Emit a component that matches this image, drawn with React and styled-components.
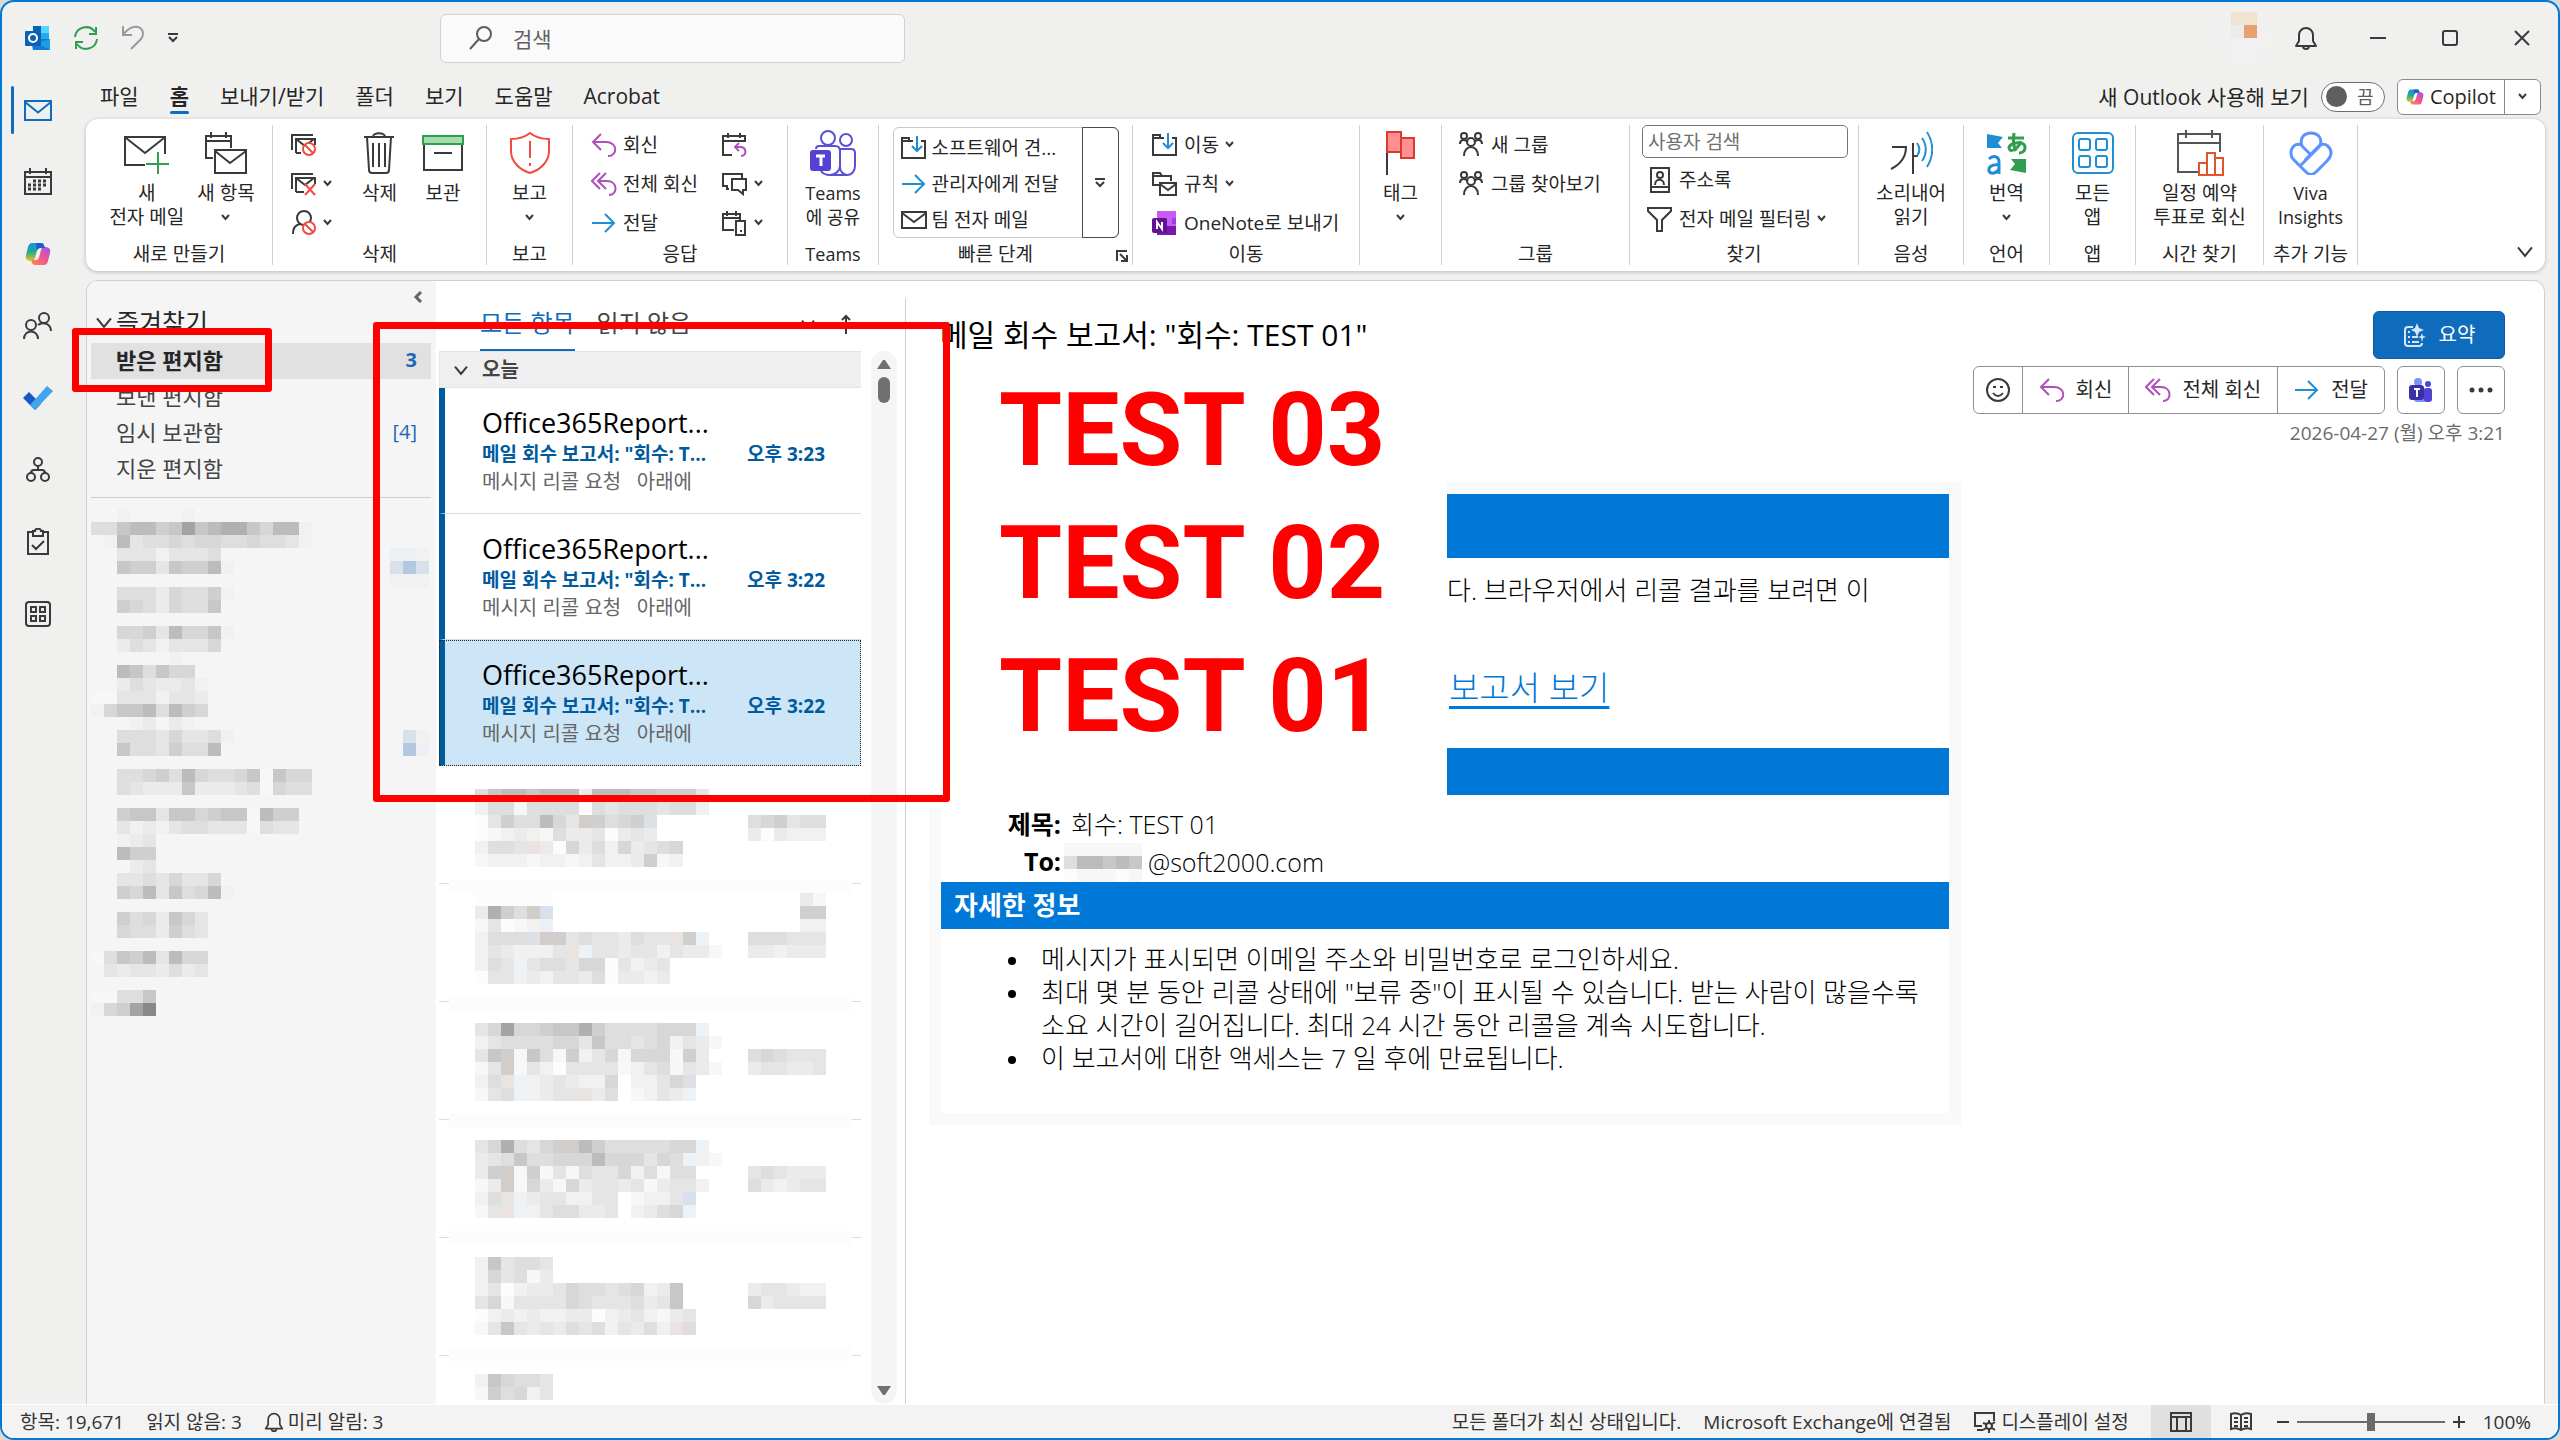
import React, { useState } from 'react';
import styled, { createGlobalStyle, css } from 'styled-components';

const GlobalStyle = createGlobalStyle`
  * {
    box-sizing: border-box;
  }
  body {
    margin: 0;
    background: #d9d9d9;
    color: #262626;
    font-family: 'Open Sans', 'Noto Sans CJK KR', sans-serif;
    font-size: 20px;
    line-height: 24px;
  }
  button,
  input {
    font: inherit;
    color: inherit;
  }
  button {
    padding: 0;
    border: 0;
    background: none;
    white-space: nowrap;
  }
  ul {
    margin: 0;
    padding: 0;
    list-style: none;
  }
  svg {
    display: block;
    flex: none;
  }
`;

/* ---------- icons ---------- */

const Icon = ({ w = 24, h = 24, color = '#3a3a3a', stroke = 2, children }) => (
  <svg
    width={w}
    height={h}
    viewBox={`0 0 ${w} ${h}`}
    fill="none"
    stroke={color}
    strokeWidth={stroke}
    aria-hidden="true"
  >
    {children}
  </svg>
);

const PURPLE = '#b04fbb';
const BLUE = '#1e8fd5';
const RED = '#f04a43';
const GREEN = '#2f9e4f';

const Chevron = ({ size = 9, color }) => (
  <Icon w={size} h={size} color={color}>
    <path d={`M1 ${size / 3 - 1}L${size / 2} ${size - 3}L${size - 1} ${size / 3 - 1}`} />
  </Icon>
);

const OutlookIcon = () => (
  <Icon w={26} h={26} stroke={0}>
    <path d="M8 1h16v14H8z" fill="#1490df" />
    <path d="M8 1h8v7H8z" fill="#0a63b5" />
    <path d="M16 1h8v7h-8z" fill="#50d9ff" />
    <path d="M16 8h8v7h-8z" fill="#28a8ea" />
    <path d="M6 14h19v11H8z" fill="#1479cf" />
    <path d="M25 14v11L11 18z" fill="#1b9de2" />
    <rect x="0" y="6" width="16" height="15" rx="1" fill="#0f5fb8" />
    <ellipse cx="8" cy="13" rx="4" ry="4" stroke="#fff" strokeWidth="2" />
  </Icon>
);

const SyncIcon = () => (
  <Icon w={26} h={26} color={GREEN}>
    <path d="M2 12A11 11 0 0 1 22 7M24 14A11 11 0 0 1 4 19" />
    <path d="M23 2v7h-7M3 24v-7h7" />
  </Icon>
);

const UndoIcon = () => (
  <Icon w={24} h={26} color="#9b9b9b">
    <path d="M2 1v9h9M2 10C7 3 12 1 17 2c6 2 6 8 3 12L10 24" />
  </Icon>
);

const OverflowIcon = () => (
  <Icon w={12} h={12}>
    <path d="M1 2h10M2 5l4 4 4-4" />
  </Icon>
);

const SearchIcon = () => (
  <Icon w={24} h={24} color="#5c5c5c">
    <circle cx="15" cy="8" r="7" />
    <path d="M10 13L1 23" />
  </Icon>
);

const BellIcon = ({ w = 24 }) => (
  <svg width={w} height={w} viewBox="0 0 24 24" fill="none" stroke="#3a3a3a" strokeWidth="2" aria-hidden="true">
    <path d="M2 20h20l-3-5V9a7 7 0 0 0-14 0v6z" strokeLinejoin="round" />
    <path d="M9 20a3 3 0 0 0 6 0" />
  </svg>
);

const MailIcon = ({ w = 28, h = 21, color = '#3a3a3a' }) => (
  <Icon w={w} h={h} color={color}>
    <path d={`M1 1h${w - 2}v${h - 2}H1zM1 2l${w / 2 - 1} ${h / 2}L${w - 1} 2`} />
  </Icon>
);

const CalendarIcon = () => (
  <Icon w={28} h={28}>
    <path d="M1 4h26v22H1zM1 9h26M6 0v6M22 0v6" />
    <path d="M9 13h15M4 17h20M4 21h15" strokeDasharray="3 2" strokeWidth="3" />
  </Icon>
);

const CopilotIcon = ({ w = 26 }) => (
  <svg width={w} height={w} viewBox="0 0 26 26" aria-hidden="true">
    <defs>
      <linearGradient id="copilotA" x1="0" y1="0" x2="0" y2="1">
        <stop offset="0" stopColor="#1c8fe6" />
        <stop offset="0.5" stopColor="#1fae8c" />
        <stop offset="1" stopColor="#f4c01e" />
      </linearGradient>
      <linearGradient id="copilotB" x1="1" y1="0" x2="0" y2="1">
        <stop offset="0" stopColor="#a34ff0" />
        <stop offset="0.5" stopColor="#f2588c" />
        <stop offset="1" stopColor="#ff8a50" />
      </linearGradient>
    </defs>
    <path d="M7 2h9c3 0 3 3 4 5h-5c-2 0-3 2-4 6l-1 4c-1 3-2 3-4 3-4 0-6-2-5-6l2-8c1-3 2-4 4-4z" fill="url(#copilotA)" />
    <path d="M19 24h-9c-3 0-3-3-4-5h5c2 0 3-2 4-6l1-4c1-3 2-3 4-3 4 0 6 2 5 6l-2 8c-1 3-2 4-4 4z" fill="url(#copilotB)" />
    <path d="M11 2h5c3 0 3 3 4 5h-5c-2 0-3 2-3 3z" fill="#1a5fd0" />
  </svg>
);

const PeopleIcon = () => (
  <Icon w={30} h={28}>
    <circle cx="8" cy="13" r="5" />
    <path d="M1 27c0-10 14-10 14 0" />
    <circle cx="21" cy="6" r="5" />
    <path d="M15 13c5-4 13-1 13 6" />
  </Icon>
);

const TodoIcon = () => (
  <Icon w={30} h={24} stroke={0}>
    <path d="M0 12l6-6 12 12-6 6z" fill="#185abd" />
    <path d="M7 19L24 0l6 5-18 19z" fill="#41a5ee" />
  </Icon>
);

const OrgIcon = () => (
  <Icon w={24} h={26}>
    <circle cx="12" cy="5" r="4" />
    <circle cx="5" cy="20" r="4" />
    <circle cx="19" cy="20" r="4" />
    <path d="M12 9v4M5 16c0-2 1-3 3-3h8c2 0 3 1 3 3" />
  </Icon>
);

const ClipIcon = () => (
  <Icon w={24} h={28}>
    <path d="M7 4H2v22h20V4h-5M7 3h2c0-3 6-3 6 0h2v5H7zM6 17l4 4 8-8" />
  </Icon>
);

const AppsIcon = () => (
  <Icon w={26} h={26}>
    <rect x="1" y="1" width="24" height="24" rx="3" />
    <path d="M6 6h5v5H6zM15 6h5v5h-5zM6 15h5v5H6zM15 15h5v5h-5z" />
  </Icon>
);

const NewMailIcon = () => (
  <Icon w={46} h={42}>
    <path d="M41 22V5H1v28h20M2 6l19 15L40 6" />
    <path d="M22 32h23M34 20v22" stroke={GREEN} />
  </Icon>
);

const NewItemsIcon = () => (
  <Icon w={42} h={42}>
    <path d="M8 26H1V4h25v12M1 9h25M6 0v6M21 0v6M10 18h31v23H10zM10 19l15 12 16-12" />
  </Icon>
);

const Ban = ({ x = 17, y = 16 }) => (
  <g stroke={RED}>
    <circle cx={x} cy={y} r="6" fill="#fff" />
    <path d={`M${x - 4} ${y - 4}l8 8`} />
  </g>
);

const IgnoreIcon = () => (
  <Icon w={26} h={24}>
    <path d="M1 17V2h21M5 20V6h19v6M5 6l9 7 9-7M5 20h5" />
    <Ban x={18} y={16} />
  </Icon>
);

const CleanUpIcon = () => (
  <Icon w={26} h={24}>
    <path d="M1 17V2h21M5 20V6h19v6M5 6l9 7 9-7M5 20h8" />
    <path d="M14 12l10 11M24 12L14 23" stroke={RED} />
  </Icon>
);

const JunkIcon = () => (
  <Icon w={26} h={26}>
    <circle cx="13" cy="8" r="7" />
    <path d="M9 14c-5 1-7 5-7 10" />
    <Ban x={18} y={18} />
  </Icon>
);

const TrashIcon = () => (
  <Icon w={32} h={42}>
    <path d="M1 5h30M10 5c0-5 12-5 12 0M4 5l2 33c0 2 1 3 3 3h14c2 0 3-1 3-3l2-33M10 11v24M16 11v24M22 11v24" />
  </Icon>
);

const ArchiveIcon = () => (
  <Icon w={42} h={42}>
    <path d="M2 12v26h38V12M12 21h18" />
    <rect x="1" y="4" width="40" height="8" fill="#a5dcaa" stroke={GREEN} />
  </Icon>
);

const ShieldIcon = () => (
  <Icon w={42} h={44} color={RED}>
    <path d="M21 2c5 4 12 6 19 6v12c0 11-9 19-19 22C11 39 2 31 2 20V8c7 0 14-2 19-6zM21 10v17M21 32v3" />
  </Icon>
);

const ReplyIcon = () => (
  <Icon w={26} h={24} color={PURPLE}>
    <path d="M10 1L2 9l8 8M2 9h13c12 0 12 14 2 14" />
  </Icon>
);

const ReplyAllIcon = () => (
  <Icon w={26} h={24} color={PURPLE}>
    <path d="M9 1L1 9l8 8M15 1L7 9l8 8M7 9h9c11 0 11 14 2 14" />
  </Icon>
);

const ForwardIcon = () => (
  <Icon w={26} h={24} color={BLUE}>
    <path d="M1 12h22M14 3l9 9-9 9" />
  </Icon>
);

const MeetingReplyIcon = () => (
  <Icon w={26} h={24}>
    <path d="M10 22H1V3h22v6M1 8h22M6 0v5M18 0v5" />
    <path d="M17 10l-4 4 4 4M13 14h5c7 0 7 9 1 9" stroke={PURPLE} />
  </Icon>
);

const ChatIcon = () => (
  <Icon w={26} h={24}>
    <path d="M7 17H5v-3H1V2h19v5M10 7h14v11h-3v4l-5-4h-6z" />
  </Icon>
);

const ShareMobileIcon = () => (
  <Icon w={26} h={26}>
    <path d="M12 20H1V4h17v7M1 8h17M5 1v5M14 1v5M14 11h9v14h-9zM18 21h2" />
  </Icon>
);

const TeamsIcon = () => (
  <Icon w={46} h={48} color="#5b4fd8">
    <circle cx="18" cy="9" r="7" />
    <circle cx="36" cy="11" r="6" />
    <path d="M6 20c0-2 1-3 3-3h16c3 0 5 2 5 5v15c0 5-5 9-10 9-4 0-7-1-9-4M30 20h11c3 0 4 1 4 4v13c0 6-4 9-8 9H20M30 20v18c0 4 3 8 7 8" />
    <rect x="0" y="21" width="21" height="21" rx="3" fill="#5442d4" stroke="none" />
    <path d="M6 27h9M11 27v10" stroke="#fff" strokeWidth="3" />
  </Icon>
);

const MoveIcon = () => (
  <Icon w={26} h={24}>
    <path d="M8 5v-3H1v20h23V5h-4M1 5h11" />
    <path d="M16 0v15M11 10l5 5 5-5" stroke={BLUE} />
  </Icon>
);

const RulesIcon = () => (
  <Icon w={26} h={26}>
    <path d="M8 14H1V2h7l2 3h9v5M1 5h9M8 12h16v12H8zM8 13l8 6 8-6" />
  </Icon>
);

const OneNoteIcon = () => (
  <Icon w={26} h={26} stroke={0}>
    <path d="M5 1h19v24H5z" fill="#c65cf5" />
    <path d="M20 8h4v6h-4z" fill="#a33be0" />
    <path d="M5 16h19v9H5z" fill="#7719aa" />
    <rect x="0" y="8" width="15" height="15" rx="2" fill="#5f1292" />
    <path d="M5 19v-7l5 7v-7" stroke="#fff" strokeWidth="2" />
  </Icon>
);

const FlagIcon = () => (
  <Icon w={32} h={44}>
    <path d="M2 18v26" />
    <path d="M2 1h14v6h13v20H16v-6H2zM16 7v14" fill="#ff9091" stroke="#dc3a31" />
  </Icon>
);

const GroupIcon = () => (
  <Icon w={26} h={26}>
    <circle cx="5" cy="4" r="3" />
    <circle cx="19" cy="4" r="3" />
    <circle cx="12" cy="10" r="4" />
    <path d="M1 12c0-5 5-5 8-2M23 12c0-5-5-5-8-2M5 24c0-12 14-12 14 0" />
  </Icon>
);

const AddressBookIcon = () => (
  <Icon w={26} h={26}>
    <path d="M4 1h18v24H4zM4 20h18M8 18c0-7 9-7 9 0" />
    <circle cx="13" cy="8" r="3" />
  </Icon>
);

const FilterIcon = () => (
  <Icon w={26} h={26}>
    <path d="M1 2h23v3l-9 9v11h-5V14L1 5z" />
  </Icon>
);

const ReadAloudIcon = () => (
  <Icon w={44} h={46}>
    <path d="M3 17h14c0 9-5 17-15 22M24 13v31M24 26h5" />
    <path d="M28 13c3 4 3 9 0 13M33 8c5 7 5 16 0 23M38 2c7 11 7 24 0 35" stroke={BLUE} />
  </Icon>
);

const TranslateIcon = () => (
  <Icon w={42} h={44}>
    <path d="M1 3l16 3-5 6 4 5H1z" fill={BLUE} stroke="none" />
    <path d="M40 42l-16-3 5-6-4-5h15z" fill={GREEN} stroke="none" />
    <path d="M22 7h16M28 2c-1 8-1 12 2 18M35 10c-3 9-12 12-12 7 0-6 17-8 16 0 0 3-3 5-6 5" stroke={GREEN} strokeWidth="3" />
    <path d="M3 28c4-4 10-3 10 3v12M13 34C6 33 2 36 3 40c2 4 8 2 10-2" stroke={BLUE} strokeWidth="3" />
  </Icon>
);

const AllAppsIcon = () => (
  <Icon w={42} h={42} color={BLUE}>
    <rect x="1" y="1" width="40" height="40" rx="5" />
    <rect x="7" y="7" width="11" height="11" rx="2" />
    <rect x="24" y="7" width="11" height="11" rx="2" />
    <rect x="7" y="24" width="11" height="11" rx="2" />
    <rect x="24" y="24" width="11" height="11" rx="2" />
  </Icon>
);

const PollIcon = () => (
  <Icon w={48} h={46} color="#555">
    <path d="M22 42H2V4h42v18M2 13h42M10 0v8M36 0v8" />
    <path d="M23 33h8v12h-8zM31 23h8v22h-8zM39 28h8v17h-8z" fill="#fff" stroke="#e2542a" />
  </Icon>
);

const VivaIcon = () => (
  <Icon w={44} h={44} color="#5c93ff" stroke={3}>
    <path d="M13 15C10 6 16 2 22 2s12 4 9 13l-9 9zM13 14C6 11 2 17 2 22c0 4 1 5 4 8l11 11c3 3 7 3 10 0l11-11c3-3 4-5 4-8 0-5-5-11-11-8M22 24L12 34M31 14L16 29" />
  </Icon>
);

const SmileIcon = () => (
  <Icon w={26} h={26}>
    <circle cx="13" cy="13" r="11" />
    <path d="M8 16c3 4 7 4 10 0M8 10h3M15 10h3" />
  </Icon>
);

const TeamsColorIcon = () => (
  <Icon w={24} h={26} stroke={0}>
    <circle cx="9" cy="5" r="4" fill="#7b93ff" />
    <circle cx="19" cy="7" r="3" fill="#5442d4" />
    <path d="M4 11h12v14H8c-2 0-4-2-4-4z" fill="#7b93ff" />
    <rect x="15" y="11" width="8" height="14" rx="3" fill="#5442d4" />
    <rect x="0" y="8" width="15" height="15" rx="3" fill="#3a31a8" />
    <path d="M5 12h6M8 12v8" stroke="#fff" strokeWidth="2" />
  </Icon>
);

const SummaryIcon = () => (
  <Icon w={24} h={26} color="#d7e6f5">
    <path d="M10 5H5C3 5 2 6 2 8v13c0 2 1 3 3 3h11c2 0 3-1 3-3M5 10h2M5 15h2M9 15h6M5 20h2M9 20h7" />
    <path d="M14 1l2 5 5 2-5 2-2 5-2-5-4-2 4-2zM19 11l1 3 3 1-3 1-1 4-1-4-3-1 3-1z" fill="#d7e6f5" stroke="none" />
  </Icon>
);

const DisplayIcon = () => (
  <Icon w={24} h={22}>
    <path d="M9 15H2V2h19v8M4 19h6" />
    <circle cx="16" cy="15" r="3" />
    <path d="M16 9v3M16 18v4M10 12l3 1M19 17l3 2M10 19l3-2M19 13l3-2" />
  </Icon>
);

const LayoutIcon = () => (
  <Icon w={22} h={20}>
    <path d="M1 1h20v18H1zM1 5h20M7 5v14M16 5v14" />
  </Icon>
);

const BookIcon = () => (
  <Icon w={22} h={20}>
    <path d="M11 3C8 1 4 1 1 2v15c3-1 7-1 10 1 3-2 7-2 10-1V2c-3-1-7-1-10 1zM11 3v15M4 6h4M4 10h4M4 14h4M14 6h4M14 10h4M14 14h4" />
  </Icon>
);

/* ---------- censored areas ---------- */

const CELL = 13;

const SHADES = {
  0: '#fcfcfc',
  1: '#f7f7f7',
  2: '#f1f1f1',
  3: '#ebebeb',
  4: '#e5e5e5',
  5: '#dedede',
  6: '#d7d7d7',
  7: '#cfcfcf',
  8: '#c7c7c7',
  9: '#bcbcbc',
  a: '#b0b0b0',
  b: '#a3a3a3',
  c: '#888888',
  p: '#eceff3',
  q: '#d8e0ec',
  r: '#b4c8e1',
  w: '#d3cdc9',
  x: '#ebe3df',
  y: '#dde1e5',
  z: '#edf2f6',
  o: '#e8a070',
  m: '#f0e3d2',
};

const Mosaic = ({ rows, cols }) => (
  <svg width={cols * CELL} height={rows.length * CELL} shapeRendering="crispEdges" aria-hidden="true">
    {rows.map((row, y) =>
      [...row].map(
        (shade, x) =>
          SHADES[shade] && (
            <rect
              key={`${x}-${y}`}
              x={x * CELL}
              y={y * CELL}
              width={CELL}
              height={CELL}
              fill={SHADES[shade]}
            />
          )
      )
    )}
  </svg>
);

// left block, then a second block starting at a fixed column
const split = (left, right, at = 23) => left.padEnd(at, '.') + right;

const NAV_ROWS = [
  '..2....2',
  '5589978b89aa86992',
  '.2945565665565542',
  split('..44424445', 'pp2'),
  split('..877487792', 'qrq'),
  split('', '222'),
  '..555365572',
  '..76536558',
  '',
  '..667496682',
  '..35424446',
  '......2',
  '..985866',
  '..3543342',
  '114442443',
  '268895976',
  '...23.32',
  split('..555464452', 'q2', 24),
  split('..85547559', 'rp', 24),
  '',
  '..556759655681866',
  '..543338333451655',
  '',
  '..78848867881977',
  '..42324554441544',
  '..234',
  '..977',
  '...34',
  '..445464462'.slice(0, 10),
  '..769485692',
  '',
  '..7563864',
  '..6553754',
  '',
  '158794966',
  '.43443534',
  '',
  '11558',
  '267bc',
];

const BAND = '0'.repeat(31);

const LIST_ROWS = [
  '..589989993999887774',
  '..255155550545554552',
  split('..04755964w7567y', '567455'),
  split('..01232153340343', '303222'),
  '..2554x30635263456',
  '..1222122124223712',
  '',
  BAND,
  split('..000000', '31', 27),
  split('..3a75wq', '77', 27),
  split('..14012p', '22', 27),
  split('..2555yw745443544x7z', '555444'),
  split('..2432224xz4434424331', '332333'),
  '..254z45546604234',
  '..044232443503323',
  '',
  BAND,
  '',
  '..46b66788a75555666z',
  '..2455556648554562431',
  split('..48w1851wz461666173', '565444'),
  split('..14w1420444412451431', '344334'),
  '..25xz2343226.2246y',
  '..145z2344x35.1243z',
  '',
  BAND,
  '',
  '..46a5467w975555566z',
  '..3458556669666465z21',
  split('..37w17141544625155', '454333'),
  split('..13w163163443413442', '532344'),
  '..25423442244.1224q',
  '..14xz2455334.2356z',
  '',
  BAND,
  '',
  '..284554',
  '..264513',
  split('..2402334655456238', '344322'),
  split('..4614444654445348', '634444'),
  '..02323223302342134',
  '..148434354524352x5',
  '',
  BAND,
  '',
  '..286554',
  '..175624',
];

/* ---------- window and title bar ---------- */

const Window = styled.div`
  position: relative;
  display: flex;
  flex-direction: column;
  min-height: 100vh;
  border: 2px solid #0078d4;
  border-radius: 14px;
  background: #f0f0ee;
  overflow: hidden;
`;

const TitleBar = styled.header`
  display: flex;
  align-items: center;
  height: 72px;
  padding-left: 23px;
`;

const QuickAccess = styled.div`
  display: flex;
  align-items: center;
  gap: 22px;
  width: 415px;
`;

const SearchBox = styled.label`
  display: flex;
  align-items: center;
  gap: 20px;
  width: 465px;
  height: 49px;
  padding: 0 28px;
  border: 1px solid #d1d1d1;
  border-radius: 6px;
  background: #fafafa;
  input {
    flex: 1;
    min-width: 0;
    padding: 2px 0 0;
    border: 0;
    outline: 0;
    background: none;
    font-size: 21px;
  }
  input::placeholder {
    color: #616161;
    opacity: 1;
  }
`;

const WindowControls = styled.div`
  display: flex;
  align-items: center;
  margin-left: auto;
`;

const WindowButton = styled.button`
  display: grid;
  place-items: center;
  width: 72px;
  height: 40px;
`;

const Body = styled.div`
  display: flex;
  flex: 1;
  min-height: 0;
`;

const Rail = styled.nav`
  display: flex;
  flex-direction: column;
  width: 84px;
  flex: none;
`;

const RailButton = styled.button`
  display: flex;
  align-items: center;
  justify-content: center;
  height: 72px;
  padding-right: 12px;
  position: relative;
  ${({ $active }) =>
    $active &&
    css`
      &::before {
        content: '';
        position: absolute;
        left: 9px;
        top: 12px;
        width: 3px;
        height: 48px;
        border-radius: 2px;
        background: #0f6cbd;
      }
    `}
`;

const Content = styled.div`
  display: flex;
  flex-direction: column;
  flex: 1;
  min-width: 0;
  padding-right: 13px;
`;

/* ---------- ribbon ---------- */

const TabRow = styled.div`
  display: flex;
  align-items: center;
  height: 45px;
  padding: 0 4px 0 14px;
`;

const Tab = styled.button`
  height: 45px;
  margin-right: 31px;
  padding-top: 5px;
  font-size: 21px;
  font-weight: ${({ $active }) => ($active ? 700 : 400)};
  &::after {
    content: '';
    display: block;
    height: 3px;
    margin-top: 3px;
    border-radius: 2px;
    background: ${({ $active }) => ($active ? '#0f6cbd' : 'transparent')};
  }
`;

const TabRowEnd = styled.div`
  display: flex;
  align-items: center;
  gap: 12px;
  margin-left: auto;
`;

const Toggle = styled.label`
  display: flex;
  align-items: center;
  gap: 12px;
  font-size: 21px;
  input {
    position: absolute;
    opacity: 0;
  }
`;

const ToggleTrack = styled.span`
  display: flex;
  align-items: center;
  gap: 10px;
  width: 64px;
  height: 30px;
  padding-left: 4px;
  border: 1px solid #6e6e6e;
  border-radius: 15px;
  background: #fff;
  color: #5c5c5c;
  font-size: 18px;
  &::before {
    content: '';
    width: 21px;
    height: 21px;
    border-radius: 50%;
    background: #5f5f5f;
  }
`;

const CopilotSplit = styled.div`
  display: flex;
  height: 36px;
  border: 1px solid #8a8a8a;
  border-radius: 6px;
  background: #fff;
  button {
    display: flex;
    align-items: center;
    gap: 6px;
    padding: 0 8px;
  }
  button + button {
    width: 36px;
    padding: 0;
    justify-content: center;
    border-left: 1px solid #8a8a8a;
  }
`;

const RibbonBar = styled.section`
  display: flex;
  min-height: 152px;
  padding: 6px 0;
  border-radius: 12px;
  background: #fff;
  box-shadow: 0 1px 4px rgba(0, 0, 0, 0.24);
`;

const Group = styled.div`
  display: flex;
  flex-direction: column;
  flex: none;
  width: ${({ $width }) => $width}px;
  border-right: 1px solid #d1d1d1;
`;

const GroupBody = styled.div`
  display: flex;
  justify-content: ${({ $align }) => $align || 'center'};
  gap: ${({ $gap }) => $gap || 0}px;
  height: 117px;
  padding-left: ${({ $pad }) => $pad || 0}px;
`;

const GroupLabel = styled.div`
  position: relative;
  height: 20px;
  padding-right: ${({ $launcher }) => ($launcher ? 20 : 0)}px;
  line-height: 25px;
  text-align: center;
  white-space: nowrap;
  font-size: ${({ $latin }) => ($latin ? 18 : 19)}px;
`;

const Launcher = styled.button`
  position: absolute;
  right: 4px;
  bottom: 0;
`;

const BigButton = styled.button`
  display: flex;
  flex-direction: column;
  align-items: center;
  text-align: center;
  font-size: ${({ $latin }) => ($latin ? 18 : 19)}px;
  > span:first-child {
    display: grid;
    place-items: center;
    height: 56px;
  }
  > svg {
    margin-top: 8px;
  }
`;

const BigPair = styled.div`
  display: flex;
  gap: 25px;
`;

const SmallColumn = styled.div`
  display: flex;
  flex-direction: column;
`;

const SmallButton = styled.button`
  display: flex;
  align-items: center;
  gap: 6px;
  height: 39px;
  font-size: 19px;
`;

const StepsBox = styled.div`
  display: flex;
  width: 226px;
  height: 111px;
  margin: 2px 0 0;
  border: 1px solid #c8c8c8;
  border-radius: 6px;
`;

const StepList = styled.div`
  flex: 1;
  min-width: 0;
  padding: 2px 7px 0;
  ${SmallButton} {
    height: 36px;
    gap: 5px;
  }
`;

const StepMore = styled.button`
  display: grid;
  place-items: center;
  width: 37px;
  margin: -1px;
  border: 1px solid #4a4a4a;
  border-radius: 0 6px 6px 0;
`;

const PeopleSearch = styled.input`
  width: 206px;
  height: 33px;
  margin: 0 0 2px -5px;
  padding: 0 5px;
  border: 1px solid #767676;
  border-radius: 5px;
  font-size: 19px;
  &::placeholder {
    color: #707070;
    opacity: 1;
  }
`;

const CollapseRibbon = styled.button`
  align-self: flex-end;
  margin: 0 12px 6px auto;
`;

/* ---------- folders ---------- */

const Workspace = styled.main`
  display: flex;
  flex: 1;
  min-height: 0;
  margin-top: 9px;
  border: 1px solid #cfcfcf;
  border-bottom: 0;
  border-radius: 12px 12px 0 0;
  background: #fff;
  overflow: hidden;
`;

const FolderPane = styled.aside`
  width: 349px;
  flex: none;
  padding: 0 5px 0 4px;
  background: #f5f5f5;
`;

const CollapseRow = styled.div`
  display: flex;
  justify-content: flex-end;
  height: 20px;
  padding: 10px 8px 0;
`;

const FolderHeading = styled.button`
  display: flex;
  align-items: center;
  gap: 4px;
  height: 42px;
  padding-left: 5px;
  font-size: 25px;
`;

const FolderButton = styled.button`
  display: flex;
  align-items: center;
  justify-content: space-between;
  width: 100%;
  height: 36px;
  padding: 0 14px 3px 25px;
  font-size: 22px;
  font-weight: ${({ $active }) => ($active ? 700 : 400)};
  color: ${({ $active }) => ($active ? '#262626' : '#444')};
  background: ${({ $active }) => ($active ? '#e1e1e1' : 'none')};
  span {
    color: #1f66b5;
    font-size: 20px;
  }
`;

const FolderDivider = styled.hr`
  height: 1px;
  margin: 10px 0 11px;
  border: 0;
  background: #cfcfcf;
`;

/* ---------- message list ---------- */

const ListPane = styled.section`
  display: flex;
  flex-direction: column;
  width: 469px;
  flex: none;
  padding-left: 3px;
`;

const ListTabs = styled.div`
  display: flex;
  align-items: center;
  height: 70px;
  padding: 16px 54px 0 41px;
`;

const ListTab = styled.button`
  height: 54px;
  margin-right: 22px;
  border-bottom: 2px solid ${({ $active }) => ($active ? '#0f6cbd' : 'transparent')};
  color: ${({ $active }) => ($active ? '#0f6cbd' : '#444')};
  font-size: 24px;
`;

const SortControls = styled.div`
  display: flex;
  align-items: center;
  gap: 26px;
  margin-left: auto;
`;

const ListBody = styled.div`
  display: flex;
  flex: 1;
  min-height: 0;
`;

const Messages = styled.div`
  width: 422px;
`;

const DayHeader = styled.button`
  display: flex;
  align-items: center;
  gap: 14px;
  width: 100%;
  height: 37px;
  padding-left: 14px;
  border: 1px solid #e3e3e3;
  border-right: 0;
  background: #efefef;
  color: #444;
  font-weight: 700;
`;

const Message = styled.button`
  display: block;
  width: 100%;
  height: 126px;
  padding: 0 36px 0 37px;
  border-left: 6px solid #005a9e;
  border-bottom: 1px solid #dcdcdc;
  text-align: left;
  ${({ $selected }) =>
    $selected &&
    css`
      background: #cde6f7;
      outline: 1px dotted #222;
      outline-offset: -1px;
    `}
`;

const Sender = styled.div`
  font-size: 27px;
  line-height: 34px;
  color: #000;
`;

const MessageLine = styled.div`
  display: flex;
  justify-content: space-between;
  line-height: 28px;
  color: #005a9e;
  font-size: 19px;
  font-weight: 700;
`;

const Preview = styled.div`
  line-height: 28px;
  color: #666;
  white-space: pre;
`;

const Older = styled.div`
  position: relative;
  > svg {
    position: absolute;
    top: 23px;
    left: 10px;
  }
`;

const OlderRow = styled.div`
  height: 118px;
  border-bottom: 1px solid #dcdcdc;
`;

const Scrollbar = styled.div`
  display: flex;
  flex-direction: column;
  align-items: center;
  width: 26px;
  margin-left: 10px;
  padding: 8px 0;
  border-radius: 13px;
  background: #f5f5f5;
`;

const ScrollThumb = styled.div`
  width: 12px;
  height: 26px;
  margin: 8px 0 auto;
  border-radius: 6px;
  background: #707070;
`;

/* ---------- reading pane ---------- */

const Reader = styled.section`
  flex: 1;
  min-width: 0;
  padding: 30px 39px 0 24px;
  position: relative;
  &::before {
    content: '';
    position: absolute;
    left: 0;
    top: 17px;
    bottom: 0;
    width: 1px;
    background: #cfcfcf;
  }
`;

const ReaderHeader = styled.div`
  display: flex;
  justify-content: space-between;
  margin-bottom: 37px;
`;

const Subject = styled.h1`
  margin: 0;
  padding-left: 11px;
  font-size: 30px;
  line-height: 48px;
  font-weight: 400;
  color: #000;
`;

const Actions = styled.div`
  display: flex;
  flex-direction: column;
  align-items: flex-end;
  gap: 7px;
`;

const SummaryButton = styled.button`
  display: flex;
  align-items: center;
  justify-content: center;
  gap: 12px;
  width: 132px;
  height: 48px;
  border-radius: 6px;
  border: 1px solid #0c5ca5;
  background: #0f6cbd;
  color: #fff;
`;

const ActionRow = styled.div`
  display: flex;
  gap: 12px;
`;

const ActionGroup = styled.div`
  display: flex;
  height: 48px;
  border: 1px solid #8f8f8f;
  border-radius: 6px;
  button {
    display: flex;
    align-items: center;
    justify-content: center;
    gap: 11px;
    padding: 0 16px;
  }
  button:first-child {
    width: 48px;
    padding: 0;
  }
  button:only-child {
    width: 46px;
  }
  button + button {
    border-left: 1px solid #8f8f8f;
  }
`;

const Received = styled.time`
  color: #6b6b6b;
  font-size: 19px;
`;

const Card = styled.article`
  position: relative;
  width: 1032px;
  padding-bottom: 38px;
  border: 12px solid #f9f9f9;
  color: #000;
  font-size: 26px;
  font-weight: 300;
  line-height: 33px;
`;

const Bar = styled.div`
  height: ${({ $tall }) => ($tall ? 64 : 47)}px;
  padding: 0 13px;
  background: #0078d7;
  color: #fff;
  font-weight: 700;
  line-height: 46px;
`;

const Paragraph = styled.p`
  margin: 16px 0 59px;
  padding-left: 506px;
`;

const ReportLink = styled.a`
  display: inline-block;
  margin: 0 0 38px 508px;
  color: #0078d7;
  font-size: 33px;
  line-height: 44px;
  text-underline-offset: 6px;
`;

const Fields = styled.dl`
  display: grid;
  grid-template-columns: 120px 1fr;
  margin: 11px 0 0;
  font-size: 25px;
  line-height: 37px;
  dt {
    text-align: right;
    font-weight: 700;
  }
  dd {
    display: flex;
    align-items: center;
    gap: 6px;
    margin: 0;
    padding-left: 10px;
  }
  dd:last-child {
    padding-left: 3px;
  }
`;

const Notes = styled.ul`
  padding: 14px 0 0 67px;
  li {
    display: grid;
    grid-template-columns: 33px 1fr;
    align-items: start;
  }
  li::before {
    content: '';
    width: 8px;
    height: 8px;
    margin-top: 14px;
    border-radius: 50%;
    background: #000;
  }
`;

const Callouts = styled.div`
  position: absolute;
  top: -130px;
  left: -12px;
  width: 518px;
  height: 444px;
  padding-left: 70px;
  background: #fff;
  color: #f00;
  font-family: Roboto, sans-serif;
  font-size: 102px;
  font-weight: 700;
  line-height: 133px;
  white-space: nowrap;
`;

const RedFrame = styled.div`
  position: absolute;
  left: ${({ $x }) => $x}px;
  top: ${({ $y }) => $y}px;
  width: ${({ $w }) => $w}px;
  height: ${({ $h }) => $h}px;
  border: 7px solid #f00;
  border-radius: 3px;
  pointer-events: none;
`;

/* ---------- status bar ---------- */

const StatusBar = styled.footer`
  display: flex;
  align-items: center;
  height: 34px;
  padding: 0 27px 0 18px;
  border-top: 1px solid #fff;
  background: #f3f3f3;
  color: #333;
  font-size: 19px;
  white-space: nowrap;
`;

const StatusText = styled.span`
  display: flex;
  align-items: center;
  gap: 4px;
  margin-right: 22px;
  ${({ $push }) => $push && 'margin-left: auto;'}
`;

const ViewButton = styled.button`
  display: grid;
  place-items: center;
  width: 60px;
  height: 33px;
  background: ${({ $active }) => ($active ? '#e0e0e0' : 'none')};
`;

const Zoom = styled.div`
  display: flex;
  align-items: center;
  gap: 8px;
  margin-left: 6px;
  input {
    appearance: none;
    width: 148px;
    height: 18px;
    margin: 0;
    background: linear-gradient(#6a6a6a, #6a6a6a) center / 100% 2px no-repeat;
  }
  input::-webkit-slider-thumb {
    appearance: none;
    width: 8px;
    height: 18px;
    background: #6a6a6a;
  }
  span {
    margin-left: 10px;
  }
`;

/* ---------- data ---------- */

const RAIL = [
  { label: '메일', icon: <MailIcon color="#0f6cbd" /> },
  { label: '일정', icon: <CalendarIcon /> },
  { label: 'Copilot', icon: <CopilotIcon /> },
  { label: '사람', icon: <PeopleIcon /> },
  { label: 'To Do', icon: <TodoIcon /> },
  { label: '조직', icon: <OrgIcon /> },
  { label: '작업', icon: <ClipIcon /> },
  { label: '앱', icon: <AppsIcon /> },
];

const TABS = ['파일', '홈', '보내기/받기', '폴더', '보기', '도움말', 'Acrobat'];

const FOLDERS = [
  { name: '받은 편지함', count: '3' },
  { name: '보낸 편지함' },
  { name: '임시 보관함', count: '[4]' },
  { name: '지운 편지함' },
];

const MESSAGES = [
  { id: 1, time: '오후 3:23' },
  { id: 2, time: '오후 3:22' },
  { id: 3, time: '오후 3:22' },
];

const Big = ({ icon, lines, menu, latin }) => (
  <BigButton $latin={latin}>
    <span>{icon}</span>
    {lines.map(line => (
      <span key={line}>{line}</span>
    ))}
    {menu && <Chevron />}
  </BigButton>
);

const Small = ({ icon, text, menu, label }) => (
  <SmallButton aria-label={label}>
    {icon}
    {text}
    {menu && <Chevron />}
  </SmallButton>
);

const RibbonGroup = ({ width, label, align, gap, pad, latin, launcher, children }) => (
  <Group $width={width}>
    <GroupBody $align={align} $gap={gap} $pad={pad}>
      {children}
    </GroupBody>
    <GroupLabel $latin={latin} $launcher={launcher}>
      {label}
      {launcher && (
        <Launcher aria-label="빠른 단계 관리">
          <Icon w={12} h={12}>
            <path d="M1 11V1h10M4 4l6 6M11 5v6H5" />
          </Icon>
        </Launcher>
      )}
    </GroupLabel>
  </Group>
);

const Ribbon = () => (
  <RibbonBar>
    <RibbonGroup width={187} label="새로 만들기" gap={13} pad={6}>
      <Big icon={<NewMailIcon />} lines={['새', '전자 메일']} />
      <Big icon={<NewItemsIcon />} lines={['새 항목']} menu />
    </RibbonGroup>
    <RibbonGroup width={214} label="삭제" align="flex-start" pad={18} gap={30}>
      <SmallColumn>
        <Small icon={<IgnoreIcon />} label="무시" />
        <Small icon={<CleanUpIcon />} label="정리" menu />
        <Small icon={<JunkIcon />} label="정크" menu />
      </SmallColumn>
      <BigPair>
        <Big icon={<TrashIcon />} lines={['삭제']} />
        <Big icon={<ArchiveIcon />} lines={['보관']} />
      </BigPair>
    </RibbonGroup>
    <RibbonGroup width={86} label="보고">
      <Big icon={<ShieldIcon />} lines={['보고']} menu />
    </RibbonGroup>
    <RibbonGroup width={215} label="응답" align="flex-start" pad={18} gap={24}>
      <SmallColumn>
        <Small icon={<ReplyIcon />} text="회신" />
        <Small icon={<ReplyAllIcon />} text="전체 회신" />
        <Small icon={<ForwardIcon />} text="전달" />
      </SmallColumn>
      <SmallColumn>
        <Small icon={<MeetingReplyIcon />} label="모임" />
        <Small icon={<ChatIcon />} label="채팅" menu />
        <Small icon={<ShareMobileIcon />} label="기타" menu />
      </SmallColumn>
    </RibbonGroup>
    <RibbonGroup width={91} label="Teams" latin>
      <Big icon={<TeamsIcon />} lines={['Teams', '에 공유']} latin />
    </RibbonGroup>
    <RibbonGroup width={254} label="빠른 단계" launcher>
      <StepsBox>
        <StepList>
          <Small icon={<MoveIcon />} text="소프트웨어 견..." />
          <Small icon={<ForwardIcon />} text="관리자에게 전달" />
          <Small icon={<MailIcon w={26} h={18} />} text="팀 전자 메일" />
        </StepList>
        <StepMore aria-label="빠른 단계 더 보기">
          <OverflowIcon />
        </StepMore>
      </StepsBox>
    </RibbonGroup>
    <RibbonGroup width={227} label="이동" align="flex-start" pad={19}>
      <SmallColumn>
        <Small icon={<MoveIcon />} text="이동" menu />
        <Small icon={<RulesIcon />} text="규칙" menu />
        <Small icon={<OneNoteIcon />} text="OneNote로 보내기" />
      </SmallColumn>
    </RibbonGroup>
    <RibbonGroup width={82}>
      <Big icon={<FlagIcon />} lines={['태그']} menu />
    </RibbonGroup>
    <RibbonGroup width={188} label="그룹" align="flex-start" pad={17}>
      <SmallColumn>
        <Small icon={<GroupIcon />} text="새 그룹" />
        <Small icon={<GroupIcon />} text="그룹 찾아보기" />
      </SmallColumn>
    </RibbonGroup>
    <RibbonGroup width={229} label="찾기" align="flex-start" pad={17}>
      <SmallColumn>
        <PeopleSearch aria-label="사용자 검색" placeholder="사용자 검색" />
        <Small icon={<AddressBookIcon />} text="주소록" />
        <Small icon={<FilterIcon />} text="전자 메일 필터링" menu />
      </SmallColumn>
    </RibbonGroup>
    <RibbonGroup width={105} label="음성">
      <Big icon={<ReadAloudIcon />} lines={['소리내어', '읽기']} />
    </RibbonGroup>
    <RibbonGroup width={86} label="언어">
      <Big icon={<TranslateIcon />} lines={['번역']} menu />
    </RibbonGroup>
    <RibbonGroup width={86} label="앱">
      <Big icon={<AllAppsIcon />} lines={['모든', '앱']} />
    </RibbonGroup>
    <RibbonGroup width={128} label="시간 찾기">
      <Big icon={<PollIcon />} lines={['일정 예약', '투표로 회신']} />
    </RibbonGroup>
    <RibbonGroup width={94} label="추가 기능">
      <Big icon={<VivaIcon />} lines={['Viva', 'Insights']} latin />
    </RibbonGroup>
    <CollapseRibbon aria-label="리본 축소">
      <Chevron size={16} />
    </CollapseRibbon>
  </RibbonBar>
);

const Folders = () => (
  <FolderPane>
    <CollapseRow>
      <button aria-label="폴더 창 축소">
        <Icon w={10} h={12} color="#666" stroke={3}>
          <path d="M8 1L3 6l5 5" />
        </Icon>
      </button>
    </CollapseRow>
    <FolderHeading>
      <Chevron size={16} />
      즐겨찾기
    </FolderHeading>
    <ul>
      {FOLDERS.map(({ name, count }, i) => (
        <li key={name}>
          <FolderButton $active={i === 0}>
            {name}
            {count && <span>{count}</span>}
          </FolderButton>
        </li>
      ))}
    </ul>
    <FolderDivider />
    <Mosaic rows={NAV_ROWS} cols={26} />
  </FolderPane>
);

const MessageList = () => {
  const [selected, setSelected] = useState(3);

  return (
    <ListPane>
      <ListTabs>
        <ListTab $active>모든 항목</ListTab>
        <ListTab>읽지 않음</ListTab>
        <SortControls>
          <button aria-label="정렬 기준">
            <Chevron size={14} />
          </button>
          <button aria-label="정렬 순서">
            <Icon w={10} h={20}>
              <path d="M5 20V2M1 6l4-4 4 4" />
            </Icon>
          </button>
        </SortControls>
      </ListTabs>
      <ListBody>
        <Messages>
          <DayHeader>
            <Chevron size={14} />
            오늘
          </DayHeader>
          {MESSAGES.map(({ id, time }) => (
            <Message key={id} $selected={id === selected} onClick={() => setSelected(id)}>
              <Sender>Office365Report...</Sender>
              <MessageLine>
                <span>메일 회수 보고서: "회수: T...</span>
                <span>{time}</span>
              </MessageLine>
              <Preview>{'메시지 리콜 요청   아래에'}</Preview>
            </Message>
          ))}
          <Older>
            <OlderRow />
            <OlderRow />
            <OlderRow />
            <OlderRow />
            <OlderRow />
            <Mosaic rows={LIST_ROWS} cols={31} />
          </Older>
        </Messages>
        <Scrollbar>
          <Icon w={14} h={10} stroke={0}>
            <path d="M0 10h14L8 1H6z" fill="#707070" />
          </Icon>
          <ScrollThumb />
          <Icon w={14} h={10} stroke={0}>
            <path d="M0 0h14L8 9H6z" fill="#707070" />
          </Icon>
        </Scrollbar>
      </ListBody>
    </ListPane>
  );
};

const ReadingPane = () => (
  <Reader>
    <ReaderHeader>
      <Subject>메일 회수 보고서: "회수: TEST 01"</Subject>
      <Actions>
        <SummaryButton>
          <SummaryIcon />
          요약
        </SummaryButton>
        <ActionRow>
          <ActionGroup>
            <button aria-label="반응">
              <SmileIcon />
            </button>
            <button>
              <ReplyIcon />
              회신
            </button>
            <button>
              <ReplyAllIcon />
              전체 회신
            </button>
            <button>
              <ForwardIcon />
              전달
            </button>
          </ActionGroup>
          <ActionGroup>
            <button aria-label="Teams에 공유">
              <TeamsColorIcon />
            </button>
          </ActionGroup>
          <ActionGroup>
            <button aria-label="기타 작업">
              <Icon w={24} h={6} stroke={0}>
                <g fill="#3a3a3a">
                  <circle cx="3" cy="3" r="2.5" />
                  <circle cx="12" cy="3" r="2.5" />
                  <circle cx="21" cy="3" r="2.5" />
                </g>
              </Icon>
            </button>
          </ActionGroup>
        </ActionRow>
        <Received>2026-04-27 (월) 오후 3:21</Received>
      </Actions>
    </ReaderHeader>
    <Card>
      <Bar $tall />
      <Paragraph>다. 브라우저에서 리콜 결과를 보려면 이</Paragraph>
      <ReportLink href="#report">보고서 보기</ReportLink>
      <Bar />
      <Fields>
        <dt>제목:</dt>
        <dd>회수: TEST 01</dd>
        <dt>To:</dt>
        <dd>
          <Mosaic rows={['111111', '599898', '011101']} cols={6} />
          @soft2000.com
        </dd>
      </Fields>
      <Bar>자세한 정보</Bar>
      <Notes>
        <li>메시지가 표시되면 이메일 주소와 비밀번호로 로그인하세요.</li>
        <li>
          최대 몇 분 동안 리콜 상태에 "보류 중"이 표시될 수 있습니다. 받는 사람이 많을수록 소요
          시간이 길어집니다. 최대 24 시간 동안 리콜을 계속 시도합니다.
        </li>
        <li>이 보고서에 대한 액세스는 7 일 후에 만료됩니다.</li>
      </Notes>
      <Callouts>
        <div>TEST 03</div>
        <div>TEST 02</div>
        <div>TEST 01</div>
      </Callouts>
    </Card>
  </Reader>
);

const App = () => {
  const [zoom, setZoom] = useState(100);

  return (
    <>
      <GlobalStyle />
      <Window>
        <TitleBar>
          <QuickAccess>
            <OutlookIcon />
            <button aria-label="보내기 및 받기">
              <SyncIcon />
            </button>
            <button aria-label="실행 취소">
              <UndoIcon />
            </button>
            <button aria-label="빠른 실행 도구 모음">
              <OverflowIcon />
            </button>
          </QuickAccess>
          <SearchBox>
            <SearchIcon />
            <input aria-label="검색" placeholder="검색" />
          </SearchBox>
          <WindowControls>
            <Mosaic rows={['.mm', '23o2', '.222', '.22']} cols={4} />
            <WindowButton aria-label="알림">
              <BellIcon />
            </WindowButton>
            <WindowButton aria-label="최소화">
              <Icon w={16} h={16}>
                <path d="M0 8h16" />
              </Icon>
            </WindowButton>
            <WindowButton aria-label="최대화">
              <Icon w={16} h={16}>
                <rect x="1" y="1" width="14" height="14" rx="2" />
              </Icon>
            </WindowButton>
            <WindowButton aria-label="닫기">
              <Icon w={16} h={16}>
                <path d="M1 1l14 14M15 1L1 15" />
              </Icon>
            </WindowButton>
          </WindowControls>
        </TitleBar>
        <Body>
          <Rail>
            {RAIL.map(({ label, icon }, i) => (
              <RailButton key={label} aria-label={label} $active={i === 0}>
                {icon}
              </RailButton>
            ))}
          </Rail>
          <Content>
            <TabRow>
              {TABS.map(tab => (
                <Tab key={tab} $active={tab === '홈'}>
                  {tab}
                </Tab>
              ))}
              <TabRowEnd>
                <Toggle>
                  새 Outlook 사용해 보기
                  <input type="checkbox" />
                  <ToggleTrack>끔</ToggleTrack>
                </Toggle>
                <CopilotSplit>
                  <button>
                    <CopilotIcon w={18} />
                    Copilot
                  </button>
                  <button aria-label="Copilot 옵션">
                    <Chevron />
                  </button>
                </CopilotSplit>
              </TabRowEnd>
            </TabRow>
            <Ribbon />
            <Workspace>
              <Folders />
              <MessageList />
              <ReadingPane />
            </Workspace>
          </Content>
        </Body>
        <StatusBar>
          <StatusText>항목: 19,671</StatusText>
          <StatusText>읽지 않음: 3</StatusText>
          <StatusText>
            <BellIcon w={20} />
            미리 알림: 3
          </StatusText>
          <StatusText $push>모든 폴더가 최신 상태입니다.</StatusText>
          <StatusText>Microsoft Exchange에 연결됨</StatusText>
          <StatusText>
            <DisplayIcon />
            디스플레이 설정
          </StatusText>
          <ViewButton aria-label="기본 보기" $active>
            <LayoutIcon />
          </ViewButton>
          <ViewButton aria-label="읽기용 보기">
            <BookIcon />
          </ViewButton>
          <Zoom>
            <button aria-label="축소">
              <Icon w={12} h={12}>
                <path d="M0 6h12" />
              </Icon>
            </button>
            <input
              type="range"
              aria-label="확대/축소"
              min="10"
              max="190"
              value={zoom}
              onChange={e => setZoom(Number(e.target.value))}
            />
            <button aria-label="확대">
              <Icon w={12} h={12}>
                <path d="M0 6h12M6 0v12" />
              </Icon>
            </button>
            <span>{zoom}%</span>
          </Zoom>
        </StatusBar>
        <RedFrame $x={70} $y={326} $w={200} $h={64} />
        <RedFrame $x={371} $y={320} $w={577} $h={480} />
      </Window>
    </>
  );
};

export default App;
